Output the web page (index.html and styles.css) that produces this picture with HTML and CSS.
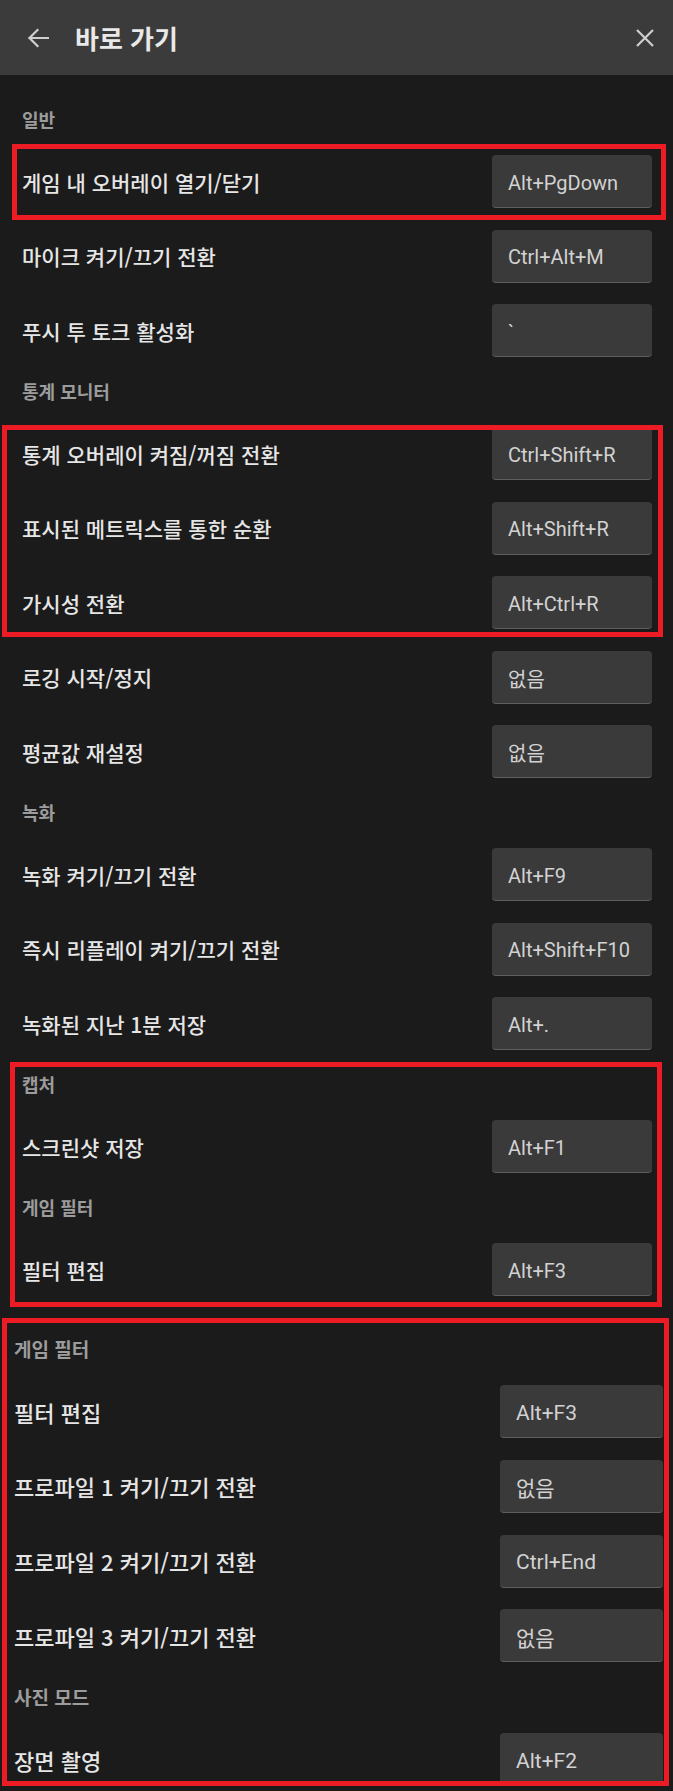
FILE: index.html
```html
<!DOCTYPE html>
<html lang="ko">
<head>
<meta charset="utf-8">
<title>바로 가기</title>
<link rel="stylesheet" href="styles.css">
</head>
<body>
<div class="screen">
  <header class="topbar">
    <svg class="icon-back" width="22" height="20" viewBox="0 0 22 20" aria-hidden="true">
      <path d="M21 10H2.5M10.5 2L2.5 10l8 8" fill="none" stroke="#cfcfcf" stroke-width="2.2" stroke-linecap="square"/>
    </svg>
    <h1 class="title">바로 가기</h1>
    <svg class="icon-close" width="18" height="18" viewBox="0 0 18 18" aria-hidden="true">
      <path d="M1 1L17 17M17 1L1 17" fill="none" stroke="#cfcfcf" stroke-width="2.2"/>
    </svg>
  </header>

  <main class="panel">
    <div class="section-label">일반</div>
    <div class="row"><span class="name">게임 내 오버레이 열기/닫기</span><span class="key">Alt+PgDown</span></div>
    <div class="row"><span class="name">마이크 켜기/끄기 전환</span><span class="key">Ctrl+Alt+M</span></div>
    <div class="row"><span class="name">푸시 투 토크 활성화</span><span class="key">`</span></div>

    <div class="section-label">통계 모니터</div>
    <div class="row"><span class="name">통계 오버레이 켜짐/꺼짐 전환</span><span class="key">Ctrl+Shift+R</span></div>
    <div class="row"><span class="name">표시된 메트릭스를 통한 순환</span><span class="key">Alt+Shift+R</span></div>
    <div class="row"><span class="name">가시성 전환</span><span class="key">Alt+Ctrl+R</span></div>
    <div class="row"><span class="name">로깅 시작/정지</span><span class="key">없음</span></div>
    <div class="row"><span class="name">평균값 재설정</span><span class="key">없음</span></div>

    <div class="section-label">녹화</div>
    <div class="row"><span class="name">녹화 켜기/끄기 전환</span><span class="key">Alt+F9</span></div>
    <div class="row"><span class="name">즉시 리플레이 켜기/끄기 전환</span><span class="key">Alt+Shift+F10</span></div>
    <div class="row"><span class="name">녹화된 지난 1분 저장</span><span class="key">Alt+.</span></div>

    <div class="section-label">캡처</div>
    <div class="row"><span class="name">스크린샷 저장</span><span class="key">Alt+F1</span></div>

    <div class="section-label">게임 필터</div>
    <div class="row"><span class="name">필터 편집</span><span class="key">Alt+F3</span></div>
  </main>

  <section class="panel panel-alt">
    <div class="section-label">게임 필터</div>
    <div class="row"><span class="name">필터 편집</span><span class="key">Alt+F3</span></div>
    <div class="row"><span class="name">프로파일 1 켜기/끄기 전환</span><span class="key">없음</span></div>
    <div class="row"><span class="name">프로파일 2 켜기/끄기 전환</span><span class="key">Ctrl+End</span></div>
    <div class="row"><span class="name">프로파일 3 켜기/끄기 전환</span><span class="key">없음</span></div>
    <div class="section-label">사진 모드</div>
    <div class="row"><span class="name">장면 촬영</span><span class="key">Alt+F2</span></div>
  </section>

  <div class="mark mark-1"></div>
  <div class="mark mark-2"></div>
  <div class="mark mark-3"></div>
  <div class="mark mark-4"></div>
</div>
</body>
</html>
```

FILE: styles.css
```css
html {
  height: 1791px;
  overflow: hidden;
  background: #1b1b1b;
}

body {
  margin: 0;
  background: #1b1b1b;
  font-family: "Noto Sans CJK KR", "Noto Sans", sans-serif;
  color: #e4e4e4;
}

.screen {
  position: relative;
  width: 673px;
  height: 1791px;
  overflow: hidden;
}

.topbar {
  height: 75px;
  background: #3b3b3b;
  display: flex;
  align-items: center;
  padding: 0 19px 0 27px;
  box-sizing: border-box;
}

.icon-back {
  flex: none;
}

.title {
  margin: 0 0 0 26px;
  font-size: 26px;
  font-weight: 700;
  color: #e9e9e9;
  line-height: 1;
  flex: 1;
}

.icon-close {
  flex: none;
}

.panel {
  display: flex;
  flex-direction: column;
  padding: 20.75px 21px 0 22px;
}

.section-label {
  height: 48.5px;
  display: flex;
  align-items: center;
  padding-bottom: 3px;
  box-sizing: border-box;
  font-size: 18px;
  font-weight: 700;
  color: #9c9c9c;
}

.row {
  height: 74.5px;
  display: flex;
  align-items: center;
  justify-content: space-between;
}

.name {
  font-size: 21px;
  font-weight: 500;
  color: #e6e6e6;
}

.key {
  width: 160px;
  height: 53px;
  box-sizing: border-box;
  display: flex;
  align-items: center;
  padding: 3px 0 0 16px;
  background: #3a3a3a;
  border-radius: 4px;
  border-bottom: 1px solid #5e5e5e;
  font-family: Roboto, "Noto Sans CJK KR", sans-serif;
  font-size: 20px;
  color: #d2d2d2;
}

.panel-alt {
  margin-top: 18.5px;
  padding: 0 10px 0 14px;
}

.panel-alt .section-label {
  height: 49px;
  font-size: 19px;
}

.panel-alt .row {
  height: 74.75px;
}

.panel-alt .name {
  font-size: 22px;
}

.panel-alt .key {
  width: 163px;
  font-size: 21px;
}

.mark {
  position: absolute;
  border: 5px solid #ed1c24;
  box-sizing: border-box;
}

.mark-1 { left: 12px; top: 144px; width: 654px; height: 76px; }
.mark-2 { left: 2px; top: 425px; width: 661px; height: 212px; }
.mark-3 { left: 10px; top: 1062px; width: 652px; height: 245px; }
.mark-4 { left: 2px; top: 1318px; width: 667px; height: 468px; }
```
